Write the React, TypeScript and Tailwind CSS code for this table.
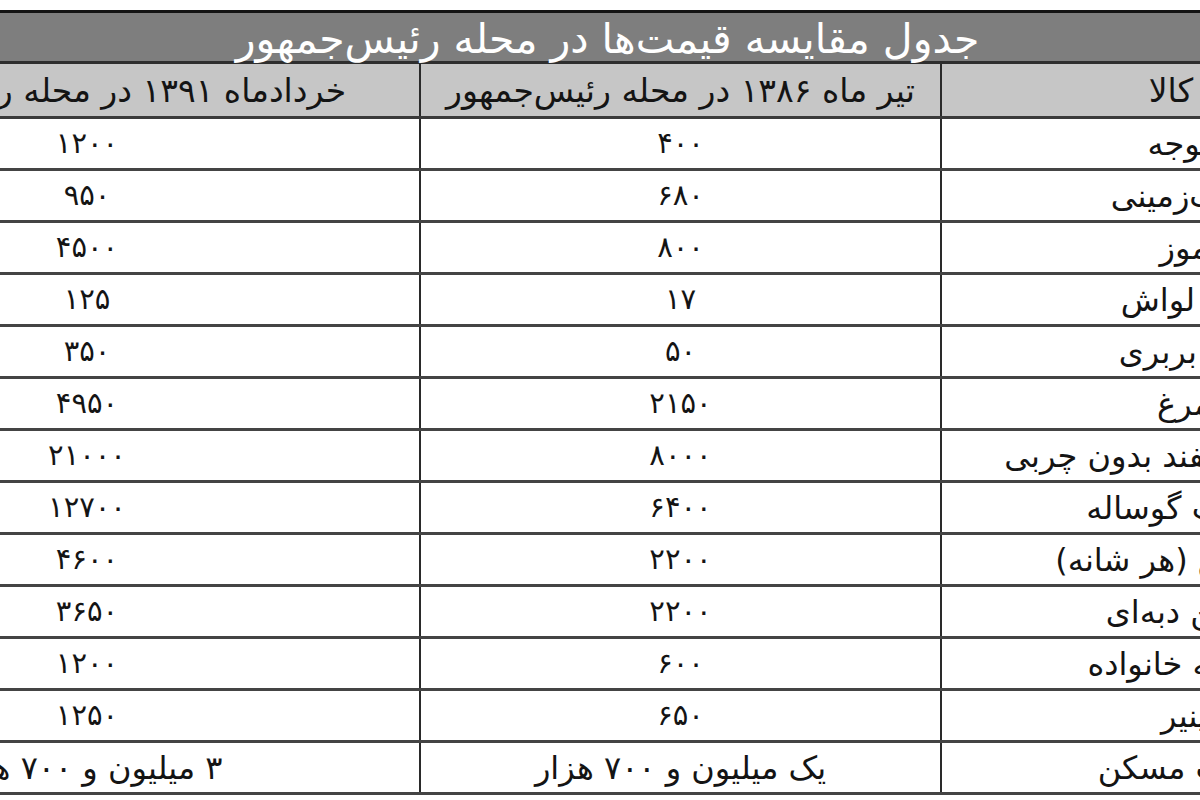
import React from 'react';

type Row = { name: string; y1386: string; y1391: string; wide?: boolean };

const rows: Row[] = [
  { name: 'جوجه', y1386: '۴۰۰', y1391: '۱۲۰۰' },
  { name: 'سیب‌زمینی', y1386: '۶۸۰', y1391: '۹۵۰' },
  { name: 'موز', y1386: '۸۰۰', y1391: '۴۵۰۰' },
  { name: 'نان لواش', y1386: '۱۷', y1391: '۱۲۵' },
  { name: 'نان بربری', y1386: '۵۰', y1391: '۳۵۰' },
  { name: 'مرغ', y1386: '۲۱۵۰', y1391: '۴۹۵۰' },
  { name: 'گوشت گوسفند بدون چربی', y1386: '۸۰۰۰', y1391: '۲۱۰۰۰' },
  { name: 'گوشت گوساله', y1386: '۶۴۰۰', y1391: '۱۲۷۰۰' },
  { name: 'تخم مرغ (هر شانه)', y1386: '۲۲۰۰', y1391: '۴۶۰۰' },
  { name: 'روغن دبه‌ای', y1386: '۲۲۰۰', y1391: '۳۶۵۰' },
  { name: 'نوشابه خانواده', y1386: '۶۰۰', y1391: '۱۲۰۰' },
  { name: 'پنیر', y1386: '۶۵۰', y1391: '۱۲۵۰' },
  { name: 'قیمت مسکن', y1386: 'یک میلیون و ۷۰۰ هزار', y1391: '۳ میلیون و ۷۰۰ هزار', wide: true },
];

const cols = 'grid grid-cols-[666px_521px_472px]';
const cell = 'flex items-center justify-center whitespace-nowrap';

export default function App() {
  return (
    <div
      className="h-[800px] w-[1200px] overflow-hidden bg-white text-[#141414]"
      style={{ fontFamily: '"DejaVu Sans", sans-serif' }}
    >
      <div className="ml-[-245px] mt-[10px] w-[1659px] border-t-[3px] border-[#141414]">
        {/* title bar */}
        <div
          dir="rtl"
          className="flex h-[51px] items-center justify-center border-b-[3px] border-[#2e2e2e] bg-[#7e7e7e] pl-[46px] pt-[5px] text-[41px] leading-none text-white"
        >
          جدول مقایسه قیمت‌ها در محله رئیس‌جمهور
        </div>

        {/* column headers */}
        <div className={`${cols} h-[55px] border-b-[3px] border-[#3a3a3a] bg-[#c6c6c6] text-[33px] leading-none`}>
          <div dir="rtl" className={`${cell} border-r-2 border-[#2a2a2a] pl-[20px]`}>
            خردادماه ۱۳۹۱ در محله رئیس‌جمهور
          </div>
          <div dir="rtl" className={`${cell} border-r-2 border-[#2a2a2a]`}>
            تیر ماه ۱۳۸۶ در محله رئیس‌جمهور
          </div>
          <div dir="rtl" className={`${cell} pl-[36px]`}>
            نام کالا
          </div>
        </div>

        {/* data rows */}
        {rows.map((r) => (
          <div key={r.name} className={`${cols} h-[52px] border-b-[3px] border-[#444444] leading-none`}>
            <div
              dir="rtl"
              className={`${cell} border-r-2 border-[#2a2a2a] ${r.wide ? 'text-[32px]' : 'text-[29px]'}`}
            >
              {r.y1391}
            </div>
            <div
              dir="rtl"
              className={`${cell} border-r-2 border-[#2a2a2a] ${r.wide ? 'text-[32px]' : 'text-[29px]'}`}
            >
              {r.y1386}
            </div>
            <div dir="rtl" className={`${cell} pl-[12px] text-[32px]`}>
              {r.name}
            </div>
          </div>
        ))}
      </div>
    </div>
  );
}
